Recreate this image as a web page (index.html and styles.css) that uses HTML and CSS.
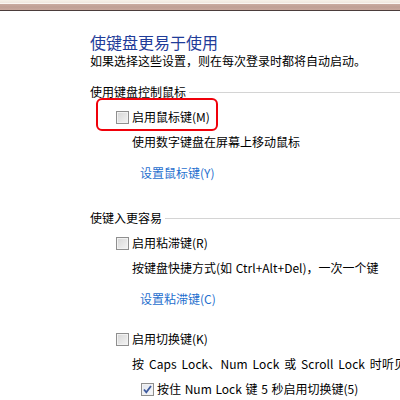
FILE: index.html
```html
<!DOCTYPE html>
<html>
<head>
    <meta charset="utf-8">
    <title>使键盘更易于使用</title>
    <link rel="stylesheet" href="styles.css">
</head>
<body>
    <div class="topbar"></div>

    <div class="page">
        <h1 class="title">使键盘更易于使用</h1>
        <p class="subtitle">如果选择这些设置，则在每次登录时都将自动启动。</p>

        <div class="group-head first">
            <span>使用键盘控制鼠标</span>
            <span class="group-line"></span>
        </div>
        <div class="option highlighted">
            <span class="checkbox"></span>
            <span>启用鼠标键(M)</span>
            <span class="mark"></span>
        </div>
        <div class="desc">使用数字键盘在屏幕上移动鼠标</div>
        <a class="link" href="#">设置鼠标键(Y)</a>

        <div class="group-head">
            <span>使键入更容易</span>
            <span class="group-line"></span>
        </div>
        <div class="option">
            <span class="checkbox"></span>
            <span>启用粘滞键(R)</span>
        </div>
        <div class="desc">按键盘快捷方式(如 Ctrl+Alt+Del)，一次一个键</div>
        <a class="link" href="#">设置粘滞键(C)</a>

        <div class="option spaced">
            <span class="checkbox"></span>
            <span>启用切换键(K)</span>
        </div>
        <div class="desc wide">按 Caps Lock、Num Lock 或 Scroll Lock 时听见提示音</div>
        <div class="option sub">
            <span class="checkbox checked">
                <svg width="11" height="11" viewBox="0 0 11 11"><path d="M2 5.5 L4.3 8.3 L9 2" fill="none" stroke="#3d5a9e" stroke-width="1.8"/></svg>
            </span>
            <span>按住 Num Lock 键 5 秒启用切换键(5)</span>
        </div>
    </div>
</body>
</html>
```

FILE: styles.css
```css
body {
    margin: 0;
    padding: 0;
    background: #fff;
    font-family: 'Noto Sans CJK SC', 'Noto Sans', sans-serif;
    font-size: 12px;
    color: #000;
    overflow: hidden;
}

.topbar {
    height: 11px;
    background: linear-gradient(to bottom,
        #f6f1ea 0px, #efe6de 3px,
        #faf6f3 3px, #faf6f3 4px,
        #c9aba1 4px, #bf9f95 7px, #c8a89e 10px,
        #4b3d3b 10px, #4b3d3b 11px);
}

.page {
    padding-left: 90px;
    white-space: nowrap;
}

.title {
    margin: 21px 0 0;
    font-size: 16px;
    font-weight: normal;
    line-height: 20px;
    color: #1f3c99;
}

.subtitle {
    margin: 1px 0 0;
    line-height: 16px;
}

.group-head {
    display: flex;
    align-items: center;
    line-height: 16px;
    margin-top: 29px;
}

.group-head.first {
    margin-top: 15px;
}

.group-line {
    flex: 1;
    height: 1px;
    margin-left: 3px;
    background: #d4d4d4;
}

.option {
    position: relative;
    display: flex;
    align-items: center;
    gap: 3px;
    margin: 9px 0 0 26px;
    line-height: 16px;
}

.option.spaced {
    margin-top: 24px;
}

.option.sub {
    margin: 9px 0 0 51px;
    word-spacing: 1px;
}

.checkbox {
    box-sizing: border-box;
    width: 13px;
    height: 13px;
    border: 1px solid #8f8f8f;
    background: linear-gradient(135deg, #d6d6d6, #f4f4f4);
    box-shadow: inset 0 0 0 1px #f2f2f2;
    display: flex;
    align-items: center;
    justify-content: center;
}

.checkbox.checked {
    background: linear-gradient(135deg, #e2e6ee, #f8f9fb);
}

.mark {
    position: absolute;
    left: -20px;
    top: -11px;
    width: 118px;
    height: 29px;
    border: 2px solid #f0000a;
    border-radius: 6px;
}

.desc {
    margin: 9px 0 0 42px;
    line-height: 16px;
    word-spacing: 1px;
}

.desc.wide {
    word-spacing: 2px;
    letter-spacing: 0.1px;
}

.link {
    display: block;
    margin: 15px 0 0 50px;
    line-height: 16px;
    color: #1f6fce;
    text-decoration: none;
}
```
